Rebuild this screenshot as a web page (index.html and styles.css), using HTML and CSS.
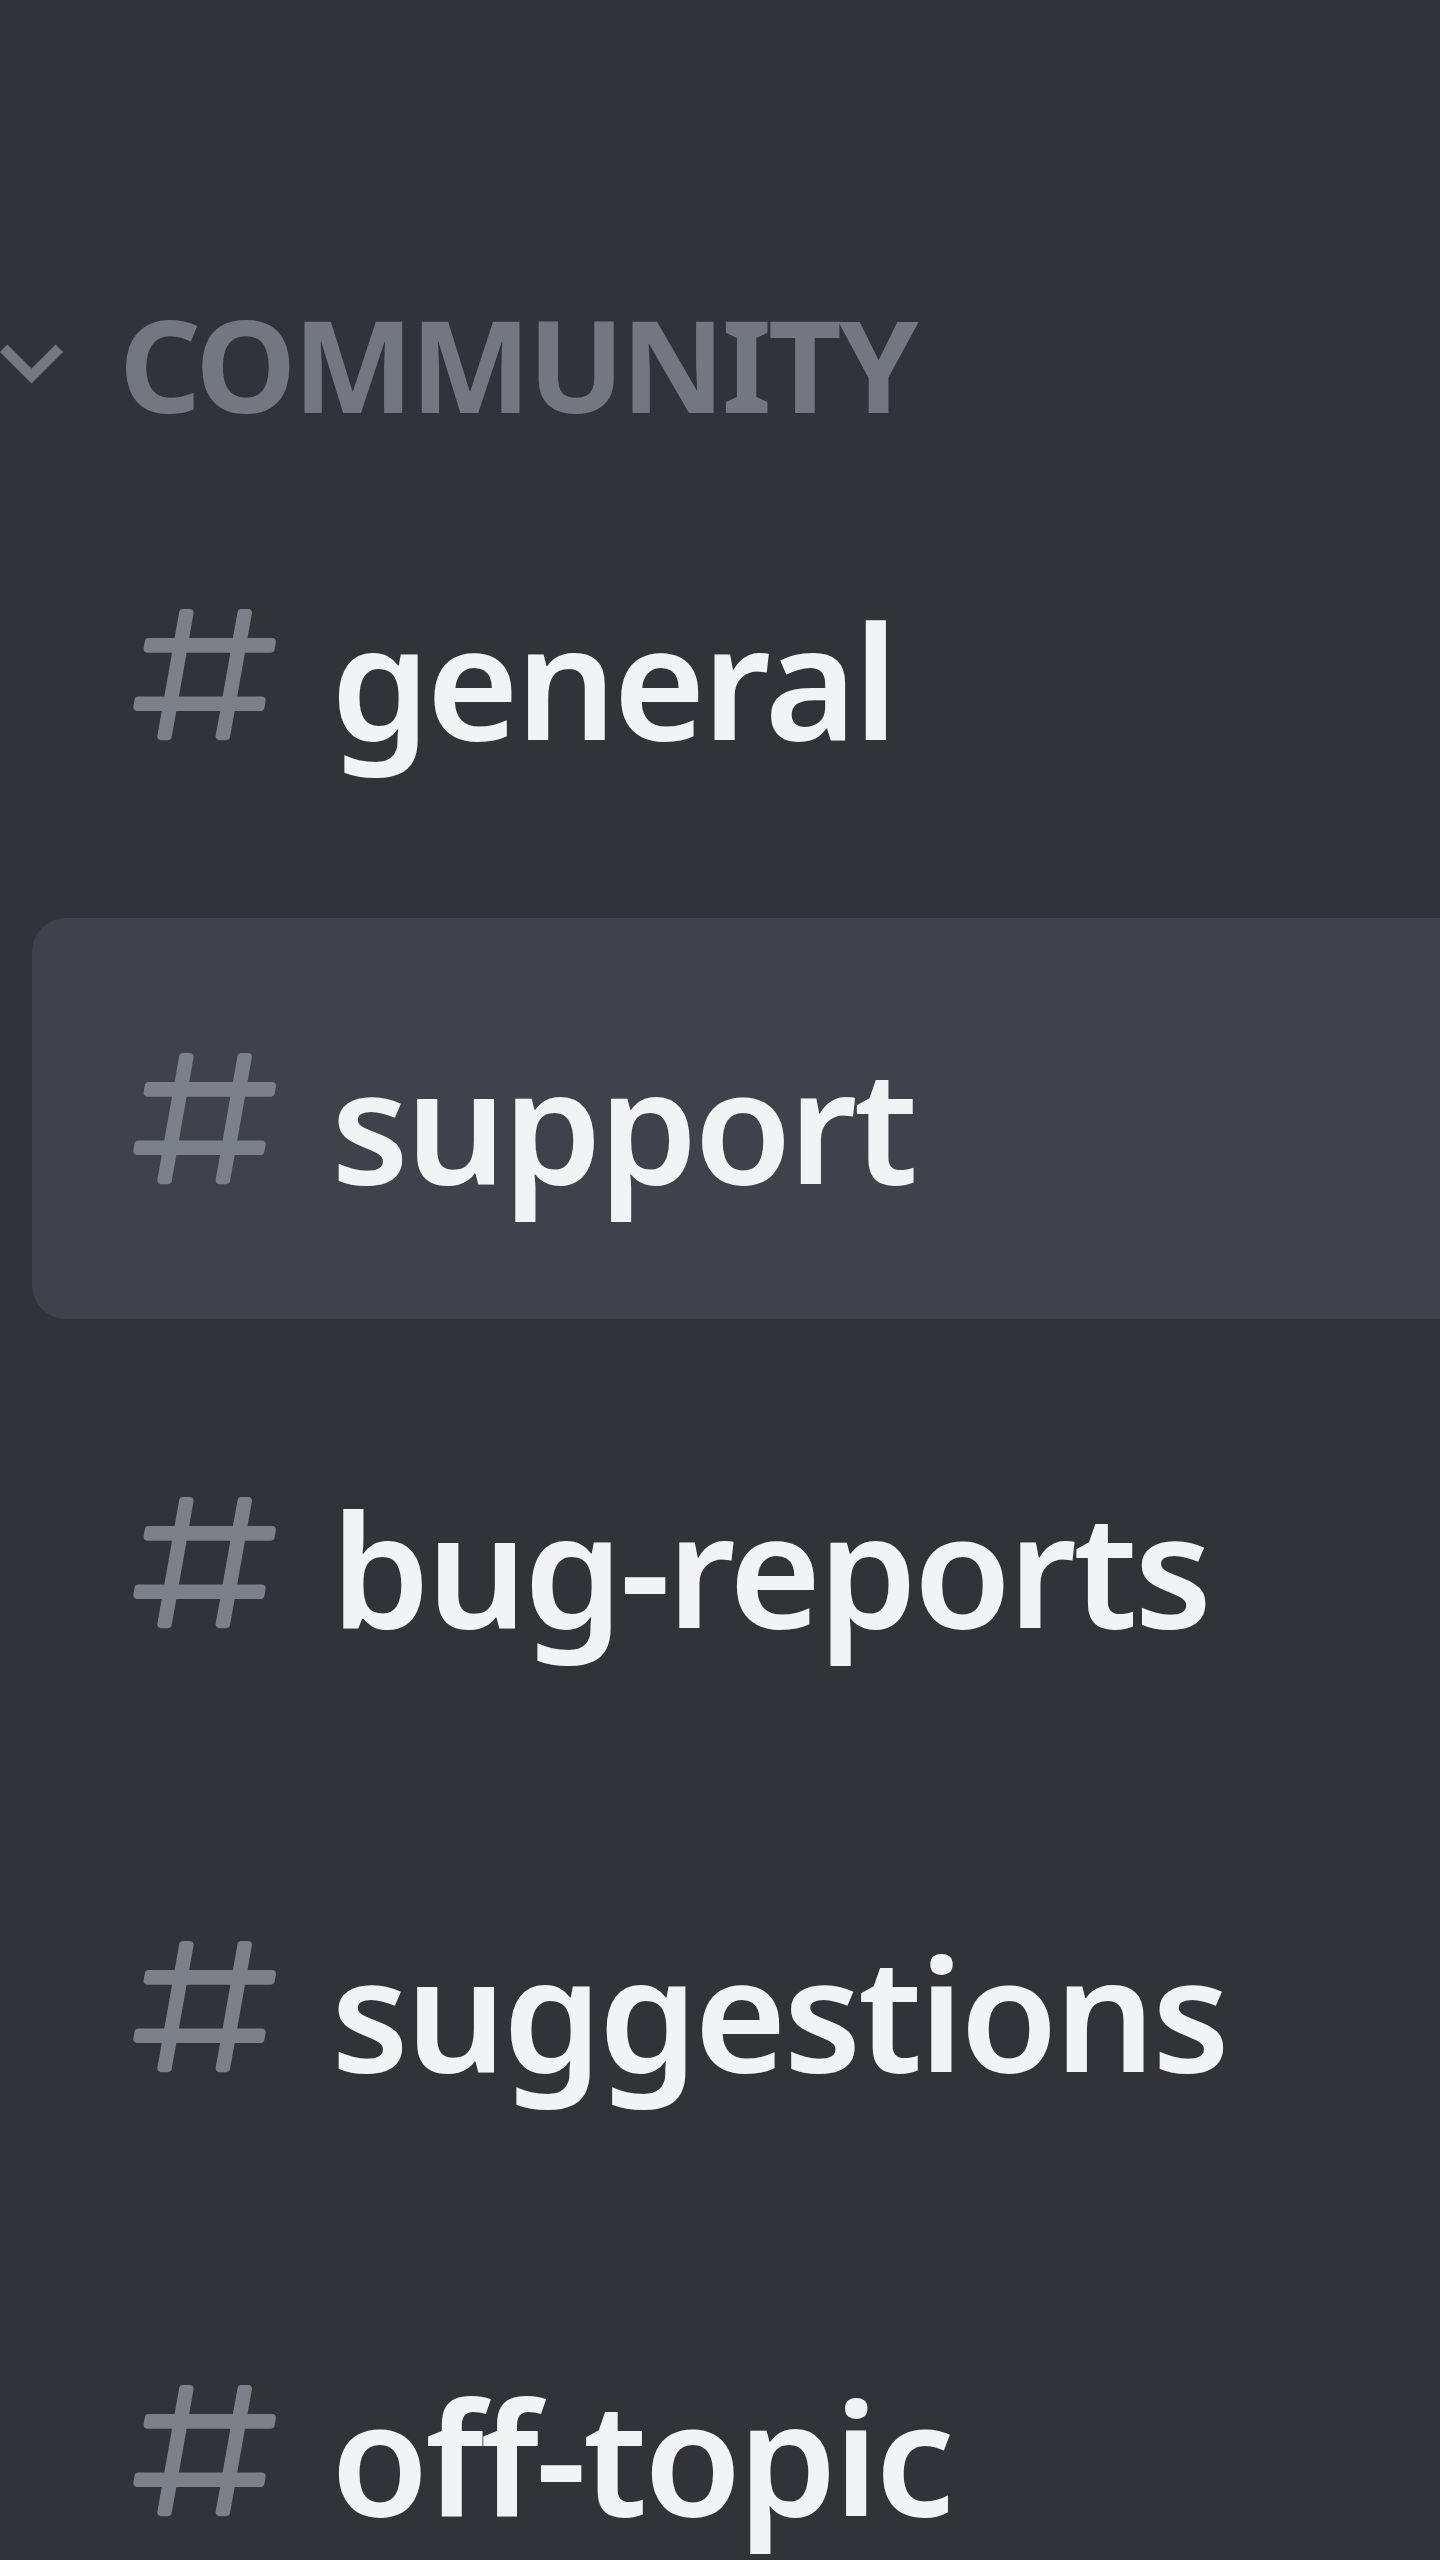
FILE: index.html
```html
<!DOCTYPE html>
<html lang="en">
<head>
<meta charset="utf-8">
<title>Channels</title>
<link rel="stylesheet" href="styles.css">
</head>
<body>
<nav class="sidebar">
  <div class="category">
    <svg class="chevron" viewBox="6 8.5 12 7.5" width="63" height="39.4" aria-hidden="true">
      <path fill="currentColor" d="M16.59 8.59L12 13.17L7.41 8.59L6 10L12 16L18 10L16.59 8.59Z"/>
    </svg>
    <span class="category-name">Community</span>
  </div>
  <ul class="channel-list">
    <li class="channel">
      <svg class="hash" viewBox="0 0 24 24" aria-hidden="true"><path fill="currentColor" fill-rule="evenodd" d="M5.88657 21C5.57547 21 5.3399 20.7189 5.39427 20.4126L6.00001 17H2.59511C2.28449 17 2.04905 16.7198 2.10259 16.4138L2.27759 15.4138C2.31946 15.1746 2.52722 15 2.77011 15H6.35001L7.41001 9H4.00511C3.69449 9 3.45905 8.71977 3.51259 8.41381L3.68759 7.41381C3.72946 7.17456 3.93722 7 4.18011 7H7.76001L8.39677 3.41262C8.43914 3.17391 8.64664 3 8.88907 3H9.87344C10.1845 3 10.4201 3.28107 10.3657 3.58738L9.76001 7H15.76L16.3968 3.41262C16.4391 3.17391 16.6466 3 16.8891 3H17.8734C18.1845 3 18.4201 3.28107 18.3657 3.58738L17.76 7H21.1649C21.4755 7 21.711 7.28023 21.6574 7.58619L21.4824 8.58619C21.4406 8.82544 21.2328 9 20.9899 9H17.41L16.35 15H19.7549C20.0655 15 20.301 15.2802 20.2474 15.5862L20.0724 16.5862C20.0306 16.8254 19.8228 17 19.5799 17H16L15.3632 20.5874C15.3209 20.8261 15.1134 21 14.8709 21H13.8866C13.5755 21 13.3399 20.7189 13.3943 20.4126L14 17H8.00001L7.36325 20.5874C7.32088 20.8261 7.11337 21 6.87094 21H5.88657ZM9.41045 9L8.35045 15H14.3504L15.4104 9H9.41045Z"/></svg>
      <span class="channel-name">general</span>
    </li>
    <li class="channel is-selected">
      <svg class="hash" viewBox="0 0 24 24" aria-hidden="true"><path fill="currentColor" fill-rule="evenodd" d="M5.88657 21C5.57547 21 5.3399 20.7189 5.39427 20.4126L6.00001 17H2.59511C2.28449 17 2.04905 16.7198 2.10259 16.4138L2.27759 15.4138C2.31946 15.1746 2.52722 15 2.77011 15H6.35001L7.41001 9H4.00511C3.69449 9 3.45905 8.71977 3.51259 8.41381L3.68759 7.41381C3.72946 7.17456 3.93722 7 4.18011 7H7.76001L8.39677 3.41262C8.43914 3.17391 8.64664 3 8.88907 3H9.87344C10.1845 3 10.4201 3.28107 10.3657 3.58738L9.76001 7H15.76L16.3968 3.41262C16.4391 3.17391 16.6466 3 16.8891 3H17.8734C18.1845 3 18.4201 3.28107 18.3657 3.58738L17.76 7H21.1649C21.4755 7 21.711 7.28023 21.6574 7.58619L21.4824 8.58619C21.4406 8.82544 21.2328 9 20.9899 9H17.41L16.35 15H19.7549C20.0655 15 20.301 15.2802 20.2474 15.5862L20.0724 16.5862C20.0306 16.8254 19.8228 17 19.5799 17H16L15.3632 20.5874C15.3209 20.8261 15.1134 21 14.8709 21H13.8866C13.5755 21 13.3399 20.7189 13.3943 20.4126L14 17H8.00001L7.36325 20.5874C7.32088 20.8261 7.11337 21 6.87094 21H5.88657ZM9.41045 9L8.35045 15H14.3504L15.4104 9H9.41045Z"/></svg>
      <span class="channel-name">support</span>
    </li>
    <li class="channel">
      <svg class="hash" viewBox="0 0 24 24" aria-hidden="true"><path fill="currentColor" fill-rule="evenodd" d="M5.88657 21C5.57547 21 5.3399 20.7189 5.39427 20.4126L6.00001 17H2.59511C2.28449 17 2.04905 16.7198 2.10259 16.4138L2.27759 15.4138C2.31946 15.1746 2.52722 15 2.77011 15H6.35001L7.41001 9H4.00511C3.69449 9 3.45905 8.71977 3.51259 8.41381L3.68759 7.41381C3.72946 7.17456 3.93722 7 4.18011 7H7.76001L8.39677 3.41262C8.43914 3.17391 8.64664 3 8.88907 3H9.87344C10.1845 3 10.4201 3.28107 10.3657 3.58738L9.76001 7H15.76L16.3968 3.41262C16.4391 3.17391 16.6466 3 16.8891 3H17.8734C18.1845 3 18.4201 3.28107 18.3657 3.58738L17.76 7H21.1649C21.4755 7 21.711 7.28023 21.6574 7.58619L21.4824 8.58619C21.4406 8.82544 21.2328 9 20.9899 9H17.41L16.35 15H19.7549C20.0655 15 20.301 15.2802 20.2474 15.5862L20.0724 16.5862C20.0306 16.8254 19.8228 17 19.5799 17H16L15.3632 20.5874C15.3209 20.8261 15.1134 21 14.8709 21H13.8866C13.5755 21 13.3399 20.7189 13.3943 20.4126L14 17H8.00001L7.36325 20.5874C7.32088 20.8261 7.11337 21 6.87094 21H5.88657ZM9.41045 9L8.35045 15H14.3504L15.4104 9H9.41045Z"/></svg>
      <span class="channel-name">bug-reports</span>
    </li>
    <li class="channel">
      <svg class="hash" viewBox="0 0 24 24" aria-hidden="true"><path fill="currentColor" fill-rule="evenodd" d="M5.88657 21C5.57547 21 5.3399 20.7189 5.39427 20.4126L6.00001 17H2.59511C2.28449 17 2.04905 16.7198 2.10259 16.4138L2.27759 15.4138C2.31946 15.1746 2.52722 15 2.77011 15H6.35001L7.41001 9H4.00511C3.69449 9 3.45905 8.71977 3.51259 8.41381L3.68759 7.41381C3.72946 7.17456 3.93722 7 4.18011 7H7.76001L8.39677 3.41262C8.43914 3.17391 8.64664 3 8.88907 3H9.87344C10.1845 3 10.4201 3.28107 10.3657 3.58738L9.76001 7H15.76L16.3968 3.41262C16.4391 3.17391 16.6466 3 16.8891 3H17.8734C18.1845 3 18.4201 3.28107 18.3657 3.58738L17.76 7H21.1649C21.4755 7 21.711 7.28023 21.6574 7.58619L21.4824 8.58619C21.4406 8.82544 21.2328 9 20.9899 9H17.41L16.35 15H19.7549C20.0655 15 20.301 15.2802 20.2474 15.5862L20.0724 16.5862C20.0306 16.8254 19.8228 17 19.5799 17H16L15.3632 20.5874C15.3209 20.8261 15.1134 21 14.8709 21H13.8866C13.5755 21 13.3399 20.7189 13.3943 20.4126L14 17H8.00001L7.36325 20.5874C7.32088 20.8261 7.11337 21 6.87094 21H5.88657ZM9.41045 9L8.35045 15H14.3504L15.4104 9H9.41045Z"/></svg>
      <span class="channel-name">suggestions</span>
    </li>
    <li class="channel">
      <svg class="hash" viewBox="0 0 24 24" aria-hidden="true"><path fill="currentColor" fill-rule="evenodd" d="M5.88657 21C5.57547 21 5.3399 20.7189 5.39427 20.4126L6.00001 17H2.59511C2.28449 17 2.04905 16.7198 2.10259 16.4138L2.27759 15.4138C2.31946 15.1746 2.52722 15 2.77011 15H6.35001L7.41001 9H4.00511C3.69449 9 3.45905 8.71977 3.51259 8.41381L3.68759 7.41381C3.72946 7.17456 3.93722 7 4.18011 7H7.76001L8.39677 3.41262C8.43914 3.17391 8.64664 3 8.88907 3H9.87344C10.1845 3 10.4201 3.28107 10.3657 3.58738L9.76001 7H15.76L16.3968 3.41262C16.4391 3.17391 16.6466 3 16.8891 3H17.8734C18.1845 3 18.4201 3.28107 18.3657 3.58738L17.76 7H21.1649C21.4755 7 21.711 7.28023 21.6574 7.58619L21.4824 8.58619C21.4406 8.82544 21.2328 9 20.9899 9H17.41L16.35 15H19.7549C20.0655 15 20.301 15.2802 20.2474 15.5862L20.0724 16.5862C20.0306 16.8254 19.8228 17 19.5799 17H16L15.3632 20.5874C15.3209 20.8261 15.1134 21 14.8709 21H13.8866C13.5755 21 13.3399 20.7189 13.3943 20.4126L14 17H8.00001L7.36325 20.5874C7.32088 20.8261 7.11337 21 6.87094 21H5.88657ZM9.41045 9L8.35045 15H14.3504L15.4104 9H9.41045Z"/></svg>
      <span class="channel-name">off-topic</span>
    </li>
  </ul>
</nav>
</body>
</html>
```
FILE: styles.css
```css
html, body {
  margin: 0;
  padding: 0;
  background: #313338;
}

body {
  font-family: "Noto Sans", "Open Sans", "Liberation Sans", sans-serif;
  overflow: hidden;
}

.sidebar {
  padding-top: 300px;
}

/* collapsible category header */
.category {
  display: flex;
  align-items: center;
  gap: 56px;
  height: 128px;
  margin-bottom: 46px;
  color: #73777e;
}

.chevron {
  flex: none;
  display: block;
}

.category-name {
  font-size: 128px;
  line-height: 128px;
  font-weight: 700;
  text-transform: uppercase;
  letter-spacing: -3.4px;
}

/* channel rows */
.channel-list {
  list-style: none;
  margin: 0;
  padding: 0;
  display: flex;
  flex-direction: column;
  gap: 43px;
}

.channel {
  display: flex;
  align-items: center;
  height: 401px;
  margin-left: 32px;
  padding-left: 86px;
  gap: 38px;
  border-radius: 34px 0 0 34px;
}

.channel.is-selected {
  background: #404249;
}

.hash {
  flex: none;
  display: block;
  width: 175px;
  height: 175px;
  color: #7c8088;
}

.channel-name {
  color: #f2f3f5;
  font-size: 158px;
  line-height: 158px;
  font-weight: 600;
  letter-spacing: -3.3px;
  padding-top: 8px;
  white-space: nowrap;
}
```
